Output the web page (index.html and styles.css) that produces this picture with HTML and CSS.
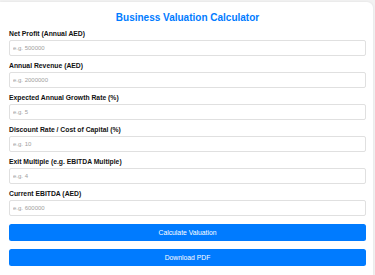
FILE: index.html
```html
<!DOCTYPE html>
<html lang="en">
<head>
<meta charset="utf-8">
<title>Business Valuation Calculator</title>
<link rel="stylesheet" href="styles.css">
</head>
<body>
<div class="container">
  <h2 class="title">Business Valuation Calculator</h2>
  <form class="form">
    <div class="group">
      <label class="label" for="np">Net Profit (Annual AED)</label>
      <input class="input" id="np" type="number" placeholder="e.g. 500000">
    </div>
    <div class="group">
      <label class="label" for="rev">Annual Revenue (AED)</label>
      <input class="input" id="rev" type="number" placeholder="e.g. 2000000">
    </div>
    <div class="group">
      <label class="label" for="gr">Expected Annual Growth Rate (%)</label>
      <input class="input" id="gr" type="number" placeholder="e.g. 5">
    </div>
    <div class="group">
      <label class="label" for="dr">Discount Rate / Cost of Capital (%)</label>
      <input class="input" id="dr" type="number" placeholder="e.g. 10">
    </div>
    <div class="group">
      <label class="label" for="em">Exit Multiple (e.g. EBITDA Multiple)</label>
      <input class="input" id="em" type="number" placeholder="e.g. 4">
    </div>
    <div class="group">
      <label class="label" for="eb">Current EBITDA (AED)</label>
      <input class="input" id="eb" type="number" placeholder="e.g. 600000">
    </div>
    <button class="btn" type="button">Calculate Valuation</button>
    <button class="btn" type="button">Download PDF</button>
  </form>
</div>
</body>
</html>
```
FILE: styles.css
```css
* { box-sizing: border-box; }
html, body {
  margin: 0;
  padding: 0;
  background: #f2f2f2;
  font-family: "Liberation Sans", Arial, sans-serif;
  overflow: hidden;
}
.container {
  background: #fff;
  margin: 2px 2px 0 0;
  border-top-right-radius: 6px;
  padding: 10px 7px 4px 9px;
  min-height: 273px;
  box-shadow: 0 0 3px rgba(0, 0, 0, 0.08);
}
.title {
  margin: 0 0 6px;
  font-size: 10px;
  line-height: 12px;
  font-weight: bold;
  color: #007bff;
  text-align: center;
}
.form {
  display: flex;
  flex-direction: column;
}
.group {
  display: flex;
  flex-direction: column;
  margin-bottom: 6px;
}
.label {
  font-size: 6.8px;
  line-height: 8px;
  font-weight: bold;
  color: #111;
  margin-bottom: 2px;
}
.input {
  height: 16px;
  border: 1px solid #e0e0e0;
  border-radius: 2px;
  padding: 0 3px;
  font-family: "Liberation Sans", Arial, sans-serif;
  font-size: 6px;
  color: #333;
  background: #fff;
  outline: none;
}
.input::placeholder { color: #a0a0a0; }
.btn {
  height: 16.5px;
  margin-top: 2px;
  margin-bottom: 6.5px;
  border: none;
  border-radius: 2.5px;
  background: #007bff;
  color: #fff;
  font-family: "Liberation Sans", Arial, sans-serif;
  font-size: 6.8px;
  padding: 0;
}
```
